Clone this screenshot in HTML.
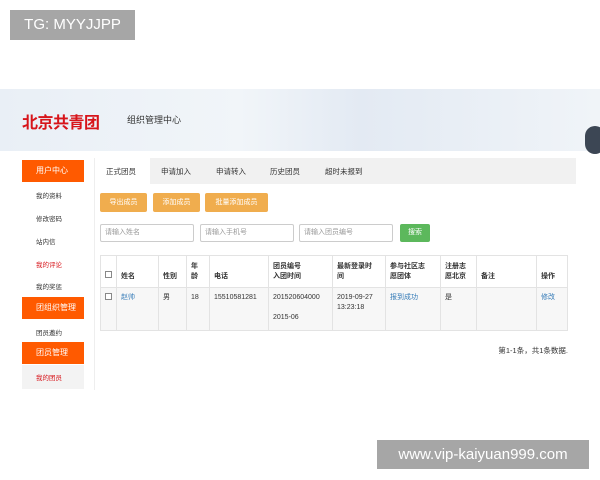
<!DOCTYPE html>
<html><head><meta charset="utf-8"><style>
*{margin:0;padding:0;box-sizing:border-box}
body{width:600px;height:480px;background:#fff;position:relative;overflow:hidden;font-family:"Liberation Sans","Noto Sans CJK SC",sans-serif;font-size:7px;color:#333}
.a{position:absolute}
.tg{left:10px;top:10px;width:125px;height:30px;background:#a6a6a6;color:#fff;font-size:15px;line-height:30px;text-align:center}
.vip{left:377px;top:440px;width:212px;height:29px;background:#a6a6a6;color:#fff;font-size:15px;line-height:29px;text-align:center}
.banner{left:0;top:89px;width:600px;height:62px;background:linear-gradient(90deg,#e9eff6,#f1f5f9 40%,#e3eaf3 60%,#f0f4f8)}
.logo{left:22px;top:109px;color:#d7141a;font-size:16px;font-weight:bold;letter-spacing:-0.5px}
.sub{left:127px;top:113px;font-size:9px;color:#333}
.side{left:22px;top:158px;width:62px;height:232px;background:#fff}
.oh{position:absolute;left:0;width:62px;height:22px;background:#ff5a00;color:#fff;font-size:8px;line-height:22px;padding-left:14px}
.si{position:absolute;left:14px;font-size:6.5px;color:#333}
.panel{left:94px;top:158px;width:482px;height:232px;background:#fff;border-left:1px solid #eee}
.tabs{left:95px;top:158px;width:481px;height:26px;background:#f1f1f1}
.tab{position:absolute;top:166px;font-size:7.5px;color:#333}
.btn{position:absolute;top:193px;height:19px;background:#f0ad4e;color:#fff;font-size:7px;line-height:19px;text-align:center;border-radius:2px}
.inp{position:absolute;top:224px;width:94px;height:18px;border:1px solid #ccc;border-radius:2px;color:#999;font-size:7px;line-height:16px;padding-left:4px}
table{position:absolute;left:100px;top:255px;width:468px;border-collapse:collapse;font-size:7px}
td{border:1px solid #e3e3e3;vertical-align:top;padding:3px 4px;line-height:10px}
thead td{height:32px;vertical-align:bottom;font-weight:bold;padding-bottom:5px;background:#fff}
tbody td{height:43px;background:#f7f7f7;padding-top:5px}
.cb{display:inline-block;width:7px;height:7px;border:1px solid #888;background:#fff}
.blue{color:#337ab7}
</style></head><body>
<div class="a tg">TG: MYYJJPP</div>
<div class="a banner"></div>
<div class="a logo">北京共青团</div>
<div class="a sub">组织管理中心</div>
<div class="a" style="left:585px;top:126px;width:20px;height:28px;border-radius:10px;background:#3c4654"></div>
<div class="a side">
<div class="oh" style="top:2px">用户中心</div>
<div class="si" style="top:32px">我的资料</div>
<div class="si" style="top:55px">修改密码</div>
<div class="si" style="top:78px">站内信</div>
<div class="si" style="top:101px;color:#d7141a">我的评论</div>
<div class="si" style="top:123px">我的奖惩</div>
<div class="oh" style="top:139px">团组织管理</div>
<div class="si" style="top:169px">团员邀约</div>
<div class="oh" style="top:184px">团员管理</div>
<div style="position:absolute;top:207px;left:0;width:62px;height:24px;background:#f3f3f3"></div>
<div class="si" style="top:214px;color:#d7141a">我的团员</div>
</div>
<div class="a panel"></div>
<div class="a tabs"></div>
<div class="a" style="left:95px;top:158px;width:55px;height:26px;background:#fff"></div>
<div class="tab" style="left:106px">正式团员</div>
<div class="tab" style="left:161px">申请加入</div>
<div class="tab" style="left:216px">申请转入</div>
<div class="tab" style="left:270px">历史团员</div>
<div class="tab" style="left:325px">超时未报到</div>
<div class="btn" style="left:100px;width:47px">导出成员</div>
<div class="btn" style="left:153px;width:47px">添加成员</div>
<div class="btn" style="left:205px;width:63px">批量添加成员</div>
<div class="inp" style="left:100px">请输入姓名</div>
<div class="inp" style="left:200px">请输入手机号</div>
<div class="inp" style="left:299px">请输入团员编号</div>
<div class="btn" style="left:400px;top:224px;width:30px;height:18px;line-height:18px;background:#5cb85c">搜索</div>
<table>
<thead><tr><td style="width:16px"><span class="cb"></span></td><td style="width:42px">姓名</td><td style="width:28px">性别</td><td style="width:23px">年<br>龄</td><td style="width:59px">电话</td><td style="width:64px">团员编号<br>入团时间</td><td style="width:53px">最新登录时<br>间</td><td style="width:55px">参与社区志<br>愿团体</td><td style="width:36px">注册志<br>愿北京</td><td style="width:60px">备注</td><td>操作</td></tr></thead>
<tbody><tr><td><span class="cb"></span></td><td class="blue">赵帅</td><td>男</td><td>18</td><td>15510581281</td><td>201520604000<br><br>2015-06</td><td>2019-09-27<br>13:23:18</td><td class="blue">报到成功</td><td>是</td><td></td><td class="blue">修改</td></tr></tbody>
</table>
<div class="a" style="left:470px;top:345px;width:98px;text-align:right;font-size:7.5px">第1-1条，共1条数据.</div>
<div class="a vip">www.vip-kaiyuan999.com</div>
</body></html>
